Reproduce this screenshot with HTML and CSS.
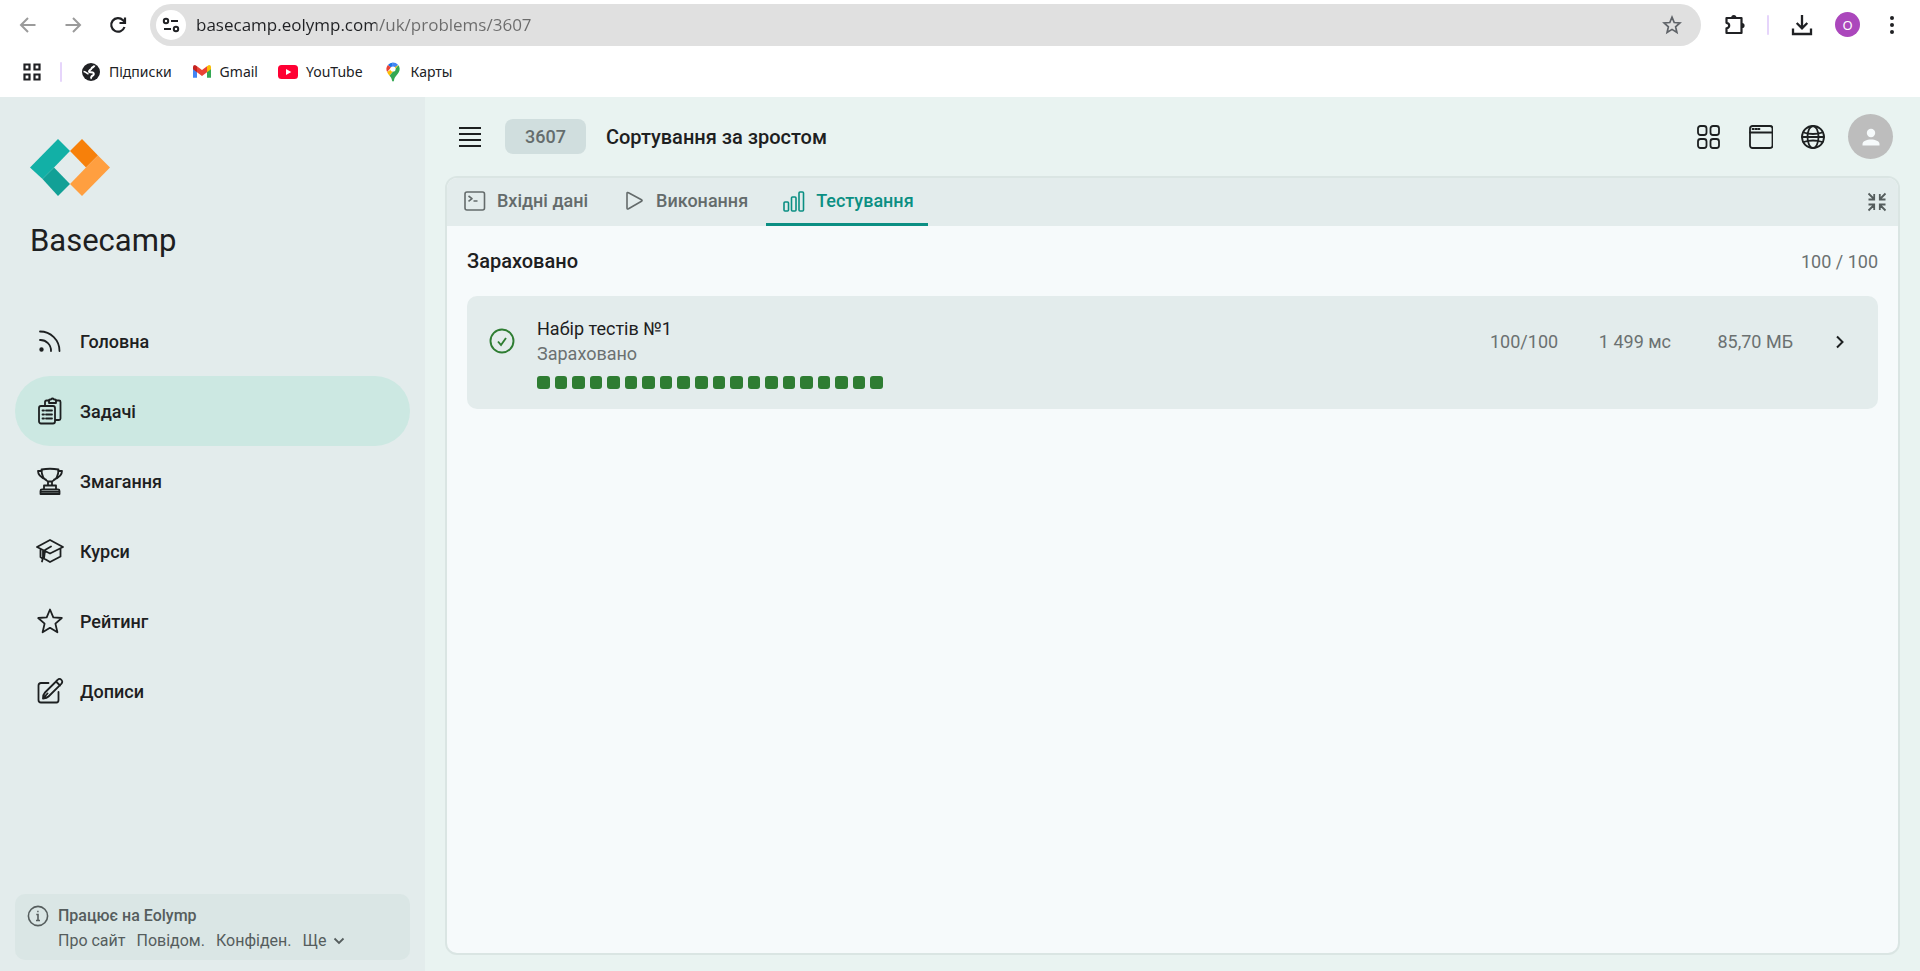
FILE: index.html
```html
<!DOCTYPE html>
<html lang="uk">
<head>
<meta charset="utf-8">
<title>Сортування за зростом</title>
<link rel="stylesheet" href="styles.css">
</head>
<body>
<div class="browser">
  <div class="toolbar">
    <div class="nav-buttons">
      <button class="icon-btn muted" aria-label="Назад"><svg width="20" height="20" viewBox="0 0 20 20" fill="none" stroke="currentColor" stroke-width="2"><path d="M17.500 10H3.500M10 3L3 10l7 7"/></svg></button>
      <button class="icon-btn muted" aria-label="Вперед"><svg width="20" height="20" viewBox="0 0 20 20" fill="none" stroke="currentColor" stroke-width="2"><path d="M2.500 10h14M10 3l7 7-7 7"/></svg></button>
      <button class="icon-btn" aria-label="Оновити"><svg width="20" height="20" viewBox="0 0 20 20" fill="none" stroke="currentColor" stroke-width="2.200"><path d="M16.500 12a6.800 6.800 0 1 1-1.500-6.800l1.500 1.600M17 2.500V8h-5.500"/></svg></button>
    </div>
    <div class="address">
      <button class="site-info" aria-label="Відомості про сайт"><svg width="18" height="18" viewBox="0 0 18 18" fill="none" stroke="currentColor" stroke-width="2"><circle cx="4" cy="5" r="2.200"/><path d="M9 5h7M2 13h7"/><circle cx="14" cy="13" r="2.200"/></svg></button>
      <input class="url" type="text" aria-label="Адреса" value="basecamp.eolymp.com/uk/problems/3607">
      <button class="icon-btn star" aria-label="Додати закладку"><svg width="20" height="20" viewBox="0 0 20 20" fill="none" stroke="currentColor" stroke-width="1.700"><path d="M10 2.200l2.200 5.300 5.700.500-4.300 3.800 1.300 5.600-4.900-3-4.900 3 1.300-5.600L2.100 8l5.700-.500z"/></svg></button>
    </div>
    <div class="browser-actions">
      <button class="icon-btn" aria-label="Розширення"><svg width="22" height="22" viewBox="0 0 22 22"><path d="M3.500 4h15v15h-15v-4.700c3.600-.600 3.600-5 0-5.500z" fill="none" stroke="currentColor" stroke-width="2.200" stroke-linejoin="round"/><path d="M8.200 3.500a2.600 2.600 0 0 1 5.200 0zM19 8.900a2.600 2.600 0 0 1 0 5.200z" fill="currentColor"/></svg></button>
      <span class="divider"></span>
      <button class="icon-btn" aria-label="Завантаження"><svg width="22" height="22" viewBox="0 0 22 22" fill="none" stroke="currentColor" stroke-width="2.300"><path d="M11 1v13M5.700 9l5.300 5.300L16.300 9M2 14.500V20h18v-5.500"/></svg></button>
      <button class="profile" aria-label="Профіль">O</button>
      <button class="icon-btn kebab" aria-label="Меню"><svg width="20" height="20" viewBox="0 0 20 20" fill="currentColor"><circle cx="10" cy="3" r="2"/><circle cx="10" cy="10" r="2"/><circle cx="10" cy="17" r="2"/></svg></button>
    </div>
  </div>
  <nav class="bookmarks" aria-label="Закладки">
    <button class="icon-btn" aria-label="Програми"><svg width="20" height="20" viewBox="0 0 20 20" fill="none" stroke="currentColor" stroke-width="2.200"><path d="M2.500 2.500h5v5h-5zM12.500 2.500h5v5h-5zM2.500 12.500h5v5h-5zM12.500 12.500h5v5h-5z"/></svg></button>
    <span class="divider"></span>
    <a href="#" class="bookmark"><svg width="20" height="20" viewBox="0 0 20 20"><circle cx="10" cy="10" r="9" fill="#202124"/><path d="M13.500 3.500c-.500 2-2.500 1.500-3 3s-2.500 1.500-2.500 3 3.500 0 4.500 1.500-.500 2.500-1.500 3-.500 2-1.500 2.500" fill="none" stroke="#fff" stroke-width="2"/><path d="M2.500 9.500c2 0 3 2 5 2.500" fill="none" stroke="#fff" stroke-width="1.600"/></svg>Підписки</a>
    <a href="#" class="bookmark"><svg width="20" height="20" viewBox="0 0 20 20"><path d="M1 4.500v11.300h4V8z" fill="#4285f4"/><path d="M19 4.500v11.300h-4V8z" fill="#34a853"/><path d="M15 4.200l2-1.200q2 0 2 2v2.200l-4 3z" fill="#fbbc04"/><path d="M5 4.200L3 3Q1 3 1 5v2.200l4 3z" fill="#c5221f"/><path d="M5 4.200l5 3.900 5-3.900v6l-5 3.700-5-3.700z" fill="#ea4335"/></svg>Gmail</a>
    <a href="#" class="bookmark"><svg width="20" height="20" viewBox="0 0 20 20"><rect y="3" width="20" height="14" rx="3.500" fill="#ff0033"/><path d="M8 7l5.300 3L8 13z" fill="#fff"/></svg>YouTube</a>
    <a href="#" class="bookmark"><svg width="20" height="20" viewBox="0 0 20 20"><path d="M10 .500A6.600 6.600 0 0 0 4.900 3l3.600 3z" fill="#1a73e8"/><path d="M10 .500a6.600 6.600 0 0 1 5 2.300L11.500 7 8 5.600z" fill="#4285f4"/><path d="M4.900 3a6.600 6.600 0 0 0-.800 7l4-4.500z" fill="#ea4335"/><path d="M4.100 10q.600 1.600 2.400 3.800L15.500 3 11 5.500z" fill="#fbbc04"/><path d="M15.400 3.200a6.600 6.600 0 0 1 .600 6.600c-1.200 3-4.500 4.500-5 8.700-.300 1.300-1.700 1.300-2 0-.300-2-1.200-3.400-2.500-4.700z" fill="#34a853"/><circle cx="10" cy="7" r="2.600" fill="#fff"/></svg>Карты</a>
  </nav>
</div>

<div class="app">
  <aside class="sidebar">
    <a href="#" class="brand">
      <svg width="80" height="57" viewBox="0 0 80 57"><path d="M28 0l12 12-16 16.500L12.500 40 0 28.500z" fill="#12b0a6"/><path d="M24 28.500L40 45 28 57 12.500 40z" fill="#12a096"/><path d="M52 0l16 16.500L56 28.500 40 12z" fill="#f7800a"/><path d="M68 16.500l12 12L52 57 40 45l16-16.500z" fill="#ff9f40"/></svg>
      <span class="brand-name">Basecamp</span>
    </a>
    <nav class="menu">
      <a href="#" class="menu-item"><svg class="line" width="28" height="28" viewBox="0 0 28 28"><path d="M4 4.500a19.500 19.500 0 0 1 19.500 19.500M4 13a10.500 10.500 0 0 1 11 11"/><circle cx="5.500" cy="22.500" r="1.300" fill="currentColor"/></svg>Головна</a>
      <a href="#" class="menu-item active" aria-current="page"><svg class="line" width="28" height="28" viewBox="0 0 28 28"><rect x="3" y="9" width="16" height="17.500" rx="2"/><path d="M9 8.500V5q0-1.500 1.500-1.500H13M20 3.500h3q1.500 0 1.500 1.500v16.500q0 1.500-1.500 1.500h-3.500"/><path d="M13 6V3.500q0-1 1-1h1q1.500-2 3 0h1q1 0 1 1V6z"/><path d="M6.500 13.500h1.500M6.500 17.500h1.500M6.500 21.500h1.500M10 13.500h6M10 17.500h6M10 21.500h6"/></svg>Задачі</a>
      <a href="#" class="menu-item"><svg class="line" width="28" height="28" viewBox="0 0 28 28"><path d="M5.500 2.500q8.500-1.500 17 0 0 9-6.500 12h-4q-6.500-3-6.500-12zM6 4H2q0 5.500 8 8.500M22 4h4q0 5.500-8 8.500M12 14.500v4M16 14.500v4M8 22.500v-4h12v4M4.500 27v-3q0-1.500 1.500-1.500h16q1.500 0 1.500 1.500v3zM5 24.800h18"/></svg>Змагання</a>
      <a href="#" class="menu-item"><svg class="line" width="28" height="28" viewBox="0 0 28 28"><path d="M14 3L1 10l13 6.500L27 10zM4.500 12v8l2 1.500M9 13.500l-1 8L14 25l10.500-5.500V11.500M15 9.500l-6 3.500-3 11.500M7 14v7"/></svg>Курси</a>
      <a href="#" class="menu-item"><svg class="line" width="28" height="28" viewBox="0 0 28 28"><path d="M14 2.500l3.300 7.800 8.500.700-6.400 5.600 2 8.700-7.400-4.500-7.400 4.500 2-8.700L2.200 11l8.500-.700z"/></svg>Рейтинг</a>
      <a href="#" class="menu-item"><svg class="line" width="28" height="28" viewBox="0 0 28 28"><path d="M12.500 6H5Q2.500 6 2.500 8.500v14.500Q2.500 25.500 5 25.500h15.500q2 0 2-2.500v-8M7 21.500q0-4 2-6L21.500 3q2-2.200 4 0 1.500 1.800 0 3.600L12.500 19.500Q11 21 7 21.500zM20 4.500L24 8.500M7 21.500l4.500-5"/></svg>Дописи</a>
    </nav>
    <footer class="about">
      <svg class="about-icon" width="22" height="22" viewBox="0 0 22 22"><circle cx="11" cy="11" r="9.600"/><path d="M9.300 9.500H11v6M9 15.500h4M10.200 6.500h1.400"/></svg>
      <div class="about-body">
        <strong class="about-title">Працює на Eolymp</strong>
        <div class="about-links"><a href="#">Про сайт</a><a href="#">Повідом.</a><a href="#">Конфіден.</a><button class="more">Ще<svg width="12" height="8" viewBox="0 0 12 8" fill="none" stroke="currentColor" stroke-width="1.800"><path d="M1.500 1.500L6 6l4.500-4.500"/></svg></button></div>
      </div>
    </footer>
  </aside>

  <main class="main">
    <header class="header">
      <button class="icon-btn" aria-label="Список"><svg width="22" height="20" viewBox="0 0 22 20" fill="none" stroke="currentColor" stroke-width="2"><path d="M0 1h22M0 7h22M0 13h22M0 19h22"/></svg></button>
      <span class="chip">3607</span>
      <h1 class="title">Сортування за зростом</h1>
      <div class="header-actions">
        <button class="icon-btn" aria-label="Застосунки"><svg class="line" width="24" height="24" viewBox="0 0 24 24"><rect x="1" y="1" width="8.500" height="9" rx="2.500"/><rect x="13.500" y="1" width="8.500" height="9" rx="2.500"/><rect x="1" y="14" width="8.500" height="9" rx="2.500"/><rect x="13.500" y="14" width="8.500" height="9" rx="2.500"/></svg></button>
        <button class="icon-btn" aria-label="Вікно"><svg class="line" width="24" height="24" viewBox="0 0 24 24"><rect x="1" y="1" width="22.500" height="22" rx="2.500"/><path d="M1 7.500h22.500M3.500 4h1.200M6.500 4h1.200M9.300 4h1.200"/></svg></button>
        <button class="icon-btn" aria-label="Мова"><svg class="line" width="24" height="24" viewBox="0 0 24 24"><circle cx="12" cy="12" r="11"/><ellipse cx="12" cy="12" rx="5.500" ry="11"/><path d="M1 12h22M2.500 7.500q9.500 3 19 0M2.500 17q9.500-3 19 0"/></svg></button>
        <button class="avatar" aria-label="Обліковий запис"><svg width="20" height="20" viewBox="0 0 20 20" fill="#f6fafb"><circle cx="10" cy="6" r="4.200"/><path d="M1.500 18.500v-1.500c0-6 17-6 17 0v1.500z"/></svg></button>
      </div>
    </header>

    <section class="panel">
      <div class="tabbar">
        <div class="tabs" role="tablist">
          <button class="tab" role="tab" aria-selected="false"><svg width="22" height="22" viewBox="0 0 22 22"><rect x="1" y="2" width="19.500" height="18" rx="2"/><path d="M4.500 6l3.500 2.700-3.500 2.700M9.500 11h4"/></svg>Вхідні дані</button>
          <button class="tab" role="tab" aria-selected="false"><svg width="22" height="22" viewBox="0 0 22 22"><path d="M4 3.500q0-1.500 1.500-.700l13 7q1.200.700 0 1.500l-13 7.500Q4 19.500 4 18z"/></svg>Виконання</button>
          <button class="tab selected" role="tab" aria-selected="true"><svg width="22" height="22" viewBox="0 0 22 22"><rect x="1" y="12" width="4.500" height="9" rx="1"/><rect x="8.500" y="7" width="4.500" height="14" rx="1"/><rect x="16" y="2" width="4.500" height="19" rx="1"/></svg>Тестування</button>
        </div>
        <button class="icon-btn collapse" aria-label="Згорнути"><svg width="20" height="20" viewBox="0 0 20 20" fill="none" stroke="currentColor" stroke-width="1.800"><path d="M1.500 1.500L7 7M7.200 2v5.500H1.500M18.500 1.500L13 7M12.800 2v5.500h5.700M1.500 18.500L7 13M7.200 18v-5.500H1.500M18.500 18.500L13 13M12.800 18v-5.500h5.700"/></svg></button>
      </div>
      <div class="results">
        <div class="summary"><h2 class="verdict">Зараховано</h2><span class="score">100 / 100</span></div>
        <article class="testset">
          <svg class="ok" width="26" height="26" viewBox="0 0 26 26"><circle cx="13" cy="13" r="11.500"/><path d="M9 13.500l3 3.500 5-7"/></svg>
          <div class="testset-body">
            <h3 class="testset-name">Набір тестів №1</h3>
            <p class="testset-status">Зараховано</p>
            <div class="cases"><i></i><i></i><i></i><i></i><i></i><i></i><i></i><i></i><i></i><i></i><i></i><i></i><i></i><i></i><i></i><i></i><i></i><i></i><i></i><i></i></div>
          </div>
          <div class="metrics"><span>100/100</span><span>1 499 мс</span><span>85,70 МБ</span><button class="icon-btn expand" aria-label="Розгорнути"><svg width="12" height="14" viewBox="0 0 12 14" fill="none" stroke="currentColor" stroke-width="2"><path d="M3 1.500L8.500 7 3 12.500"/></svg></button></div>
        </article>
      </div>
    </section>
  </main>
</div>
</body>
</html>
```

FILE: styles.css
```css
* { box-sizing: border-box; }
body {
  margin: 0;
  min-height: 100vh;
  display: flex;
  flex-direction: column;
  font-family: Roboto, "Liberation Sans", sans-serif;
  color: #1d2021;
  background: #e9f3f1;
}
svg { display: block; flex: none; }
a { color: inherit; text-decoration: none; }
button { border: 0; padding: 0; background: none; color: inherit; font: inherit; cursor: pointer; }
h1, h2, h3, p { margin: 0; }
.icon-btn { display: flex; align-items: center; justify-content: center; }
.line { fill: none; stroke: currentColor; stroke-width: 1.8; stroke-linejoin: round; stroke-linecap: round; }

/* Browser chrome */
.browser {
  flex: none;
  background: #fff;
  color: #202124;
  font-family: "Noto Sans", "Open Sans", sans-serif;
}
.toolbar { display: flex; align-items: center; height: 49px; padding: 0 18px; }
.nav-buttons { display: flex; gap: 25px; width: 132px; }
.muted { color: #9b9b9b; }
.address {
  flex: 1;
  display: flex;
  align-items: center;
  height: 42px;
  padding: 0 19px 0 6px;
  border-radius: 21px;
  background: #e0e0e0;
}
.site-info {
  display: flex;
  align-items: center;
  justify-content: center;
  width: 30px;
  height: 30px;
  border-radius: 50%;
  background: #fff;
}
.url {
  flex: 1;
  min-width: 0;
  margin-left: 10px;
  padding: 0;
  border: 0;
  outline: 0;
  font: 17px "Open Sans", "Noto Sans", sans-serif;
  color: #202124;
  background: linear-gradient(90deg, #202124 180px, #6b6b6b 180px);
  background-clip: text;
  -webkit-background-clip: text;
  -webkit-text-fill-color: transparent;
}
.star { color: #5f6368; }
.browser-actions { display: flex; align-items: center; gap: 22px; padding-left: 22px; }
.divider { width: 2px; height: 20px; border-radius: 1px; background: #e6d5fb; }
.profile {
  width: 25px;
  height: 25px;
  border-radius: 50%;
  background: #ab47bc;
  color: #fff;
  font-size: 13px;
}
.bookmarks { display: flex; align-items: center; gap: 18px; height: 48px; padding: 0 22px 3px; font-size: 14px; }
.bookmark { display: flex; align-items: center; gap: 8px; padding: 0 1px; }

/* Application shell */
.app { flex: 1; display: flex; }
.sidebar {
  flex: none;
  width: 425px;
  display: flex;
  flex-direction: column;
  padding: 42px 15px 11px;
  background: #e3ecec;
}
.brand { display: flex; flex-direction: column; gap: 25px; padding-left: 15px; }
.brand-name { font-size: 31px; line-height: 40px; }
.menu { margin-top: 45px; }
.menu-item {
  display: flex;
  align-items: center;
  gap: 16px;
  height: 70px;
  padding-left: 21px;
  border-radius: 35px;
  font-size: 18px;
  font-weight: 500;
}
.menu-item.active { background: #cce8e2; }
.about {
  display: flex;
  gap: 9px;
  margin-top: auto;
  padding: 9px 12px 7px;
  border-radius: 10px;
  background: #dae6e5;
  color: #555d5d;
  font-size: 16px;
  line-height: 25px;
}
.about-icon { margin-top: 2px; fill: none; stroke: currentColor; stroke-width: 1.6; }
.about-title { font-weight: 500; }
.about-links { display: flex; gap: 11px; }
.more { display: flex; align-items: center; gap: 7px; }

/* Main column */
.main { flex: 1; min-width: 0; display: flex; flex-direction: column; padding: 0 20px 16px; }
.header { display: flex; align-items: center; height: 79px; padding: 0 7px 0 14px; }
.chip {
  margin: 0 20px 0 24px;
  padding: 0 20px;
  border-radius: 8px;
  background: #d0dede;
  color: #656d6d;
  font-size: 18px;
  font-weight: 500;
  line-height: 35px;
}
.title { font-size: 20px; font-weight: 500; }
.header-actions { display: flex; align-items: center; gap: 28px; margin-left: auto; }
.avatar {
  display: flex;
  align-items: center;
  justify-content: center;
  width: 45px;
  height: 45px;
  margin-left: -5px;
  border-radius: 50%;
  background: #bdbdbd;
}
.panel {
  flex: 1;
  border: 2px solid #dae5e3;
  border-radius: 12px;
  overflow: hidden;
  background: #f6fafb;
}
.tabbar { display: flex; justify-content: space-between; height: 48px; padding-right: 11px; background: #e3ecec; }
.tabs { display: flex; gap: 4px; }
.tab {
  display: flex;
  align-items: center;
  gap: 11px;
  padding: 0 14px 0 17px;
  border-bottom: 3px solid transparent;
  color: #646b6b;
  font-size: 18px;
  font-weight: 500;
}
.tab svg { fill: none; stroke: currentColor; stroke-width: 1.6; stroke-linejoin: round; }
.tab.selected { color: #0b8f83; border-bottom-color: #0b8f83; }
.collapse { color: #555d5d; }
.results { padding: 20px; }
.summary { display: flex; align-items: center; justify-content: space-between; height: 30px; margin-bottom: 20px; }
.verdict { font-size: 20px; font-weight: 500; }
.score { color: #6b7171; font-size: 18px; }
.testset {
  display: flex;
  align-items: flex-start;
  padding: 20px 31px 20px 22px;
  border-radius: 10px;
  background: #e3ecec;
}
.ok { margin: 12px 22px 0 0; fill: none; stroke: #2e7d32; stroke-width: 1.9; }
.testset-name { font-size: 18px; font-weight: 400; line-height: 25px; }
.testset-status { color: #6b7171; font-size: 18px; line-height: 25px; }
.cases { display: grid; grid-template-columns: repeat(20, 1fr); gap: 5px; width: 346px; margin-top: 10px; }
.cases i { height: 13px; border-radius: 3px; background: #2e7d32; }
.metrics {
  display: grid;
  grid-template-columns: 68px 73px 82px 14px;
  align-items: center;
  gap: 40px;
  margin: 13px 0 0 auto;
  color: #6b7171;
  font-size: 18px;
  line-height: 25px;
  text-align: right;
}
.expand { color: #1d2021; }
```
